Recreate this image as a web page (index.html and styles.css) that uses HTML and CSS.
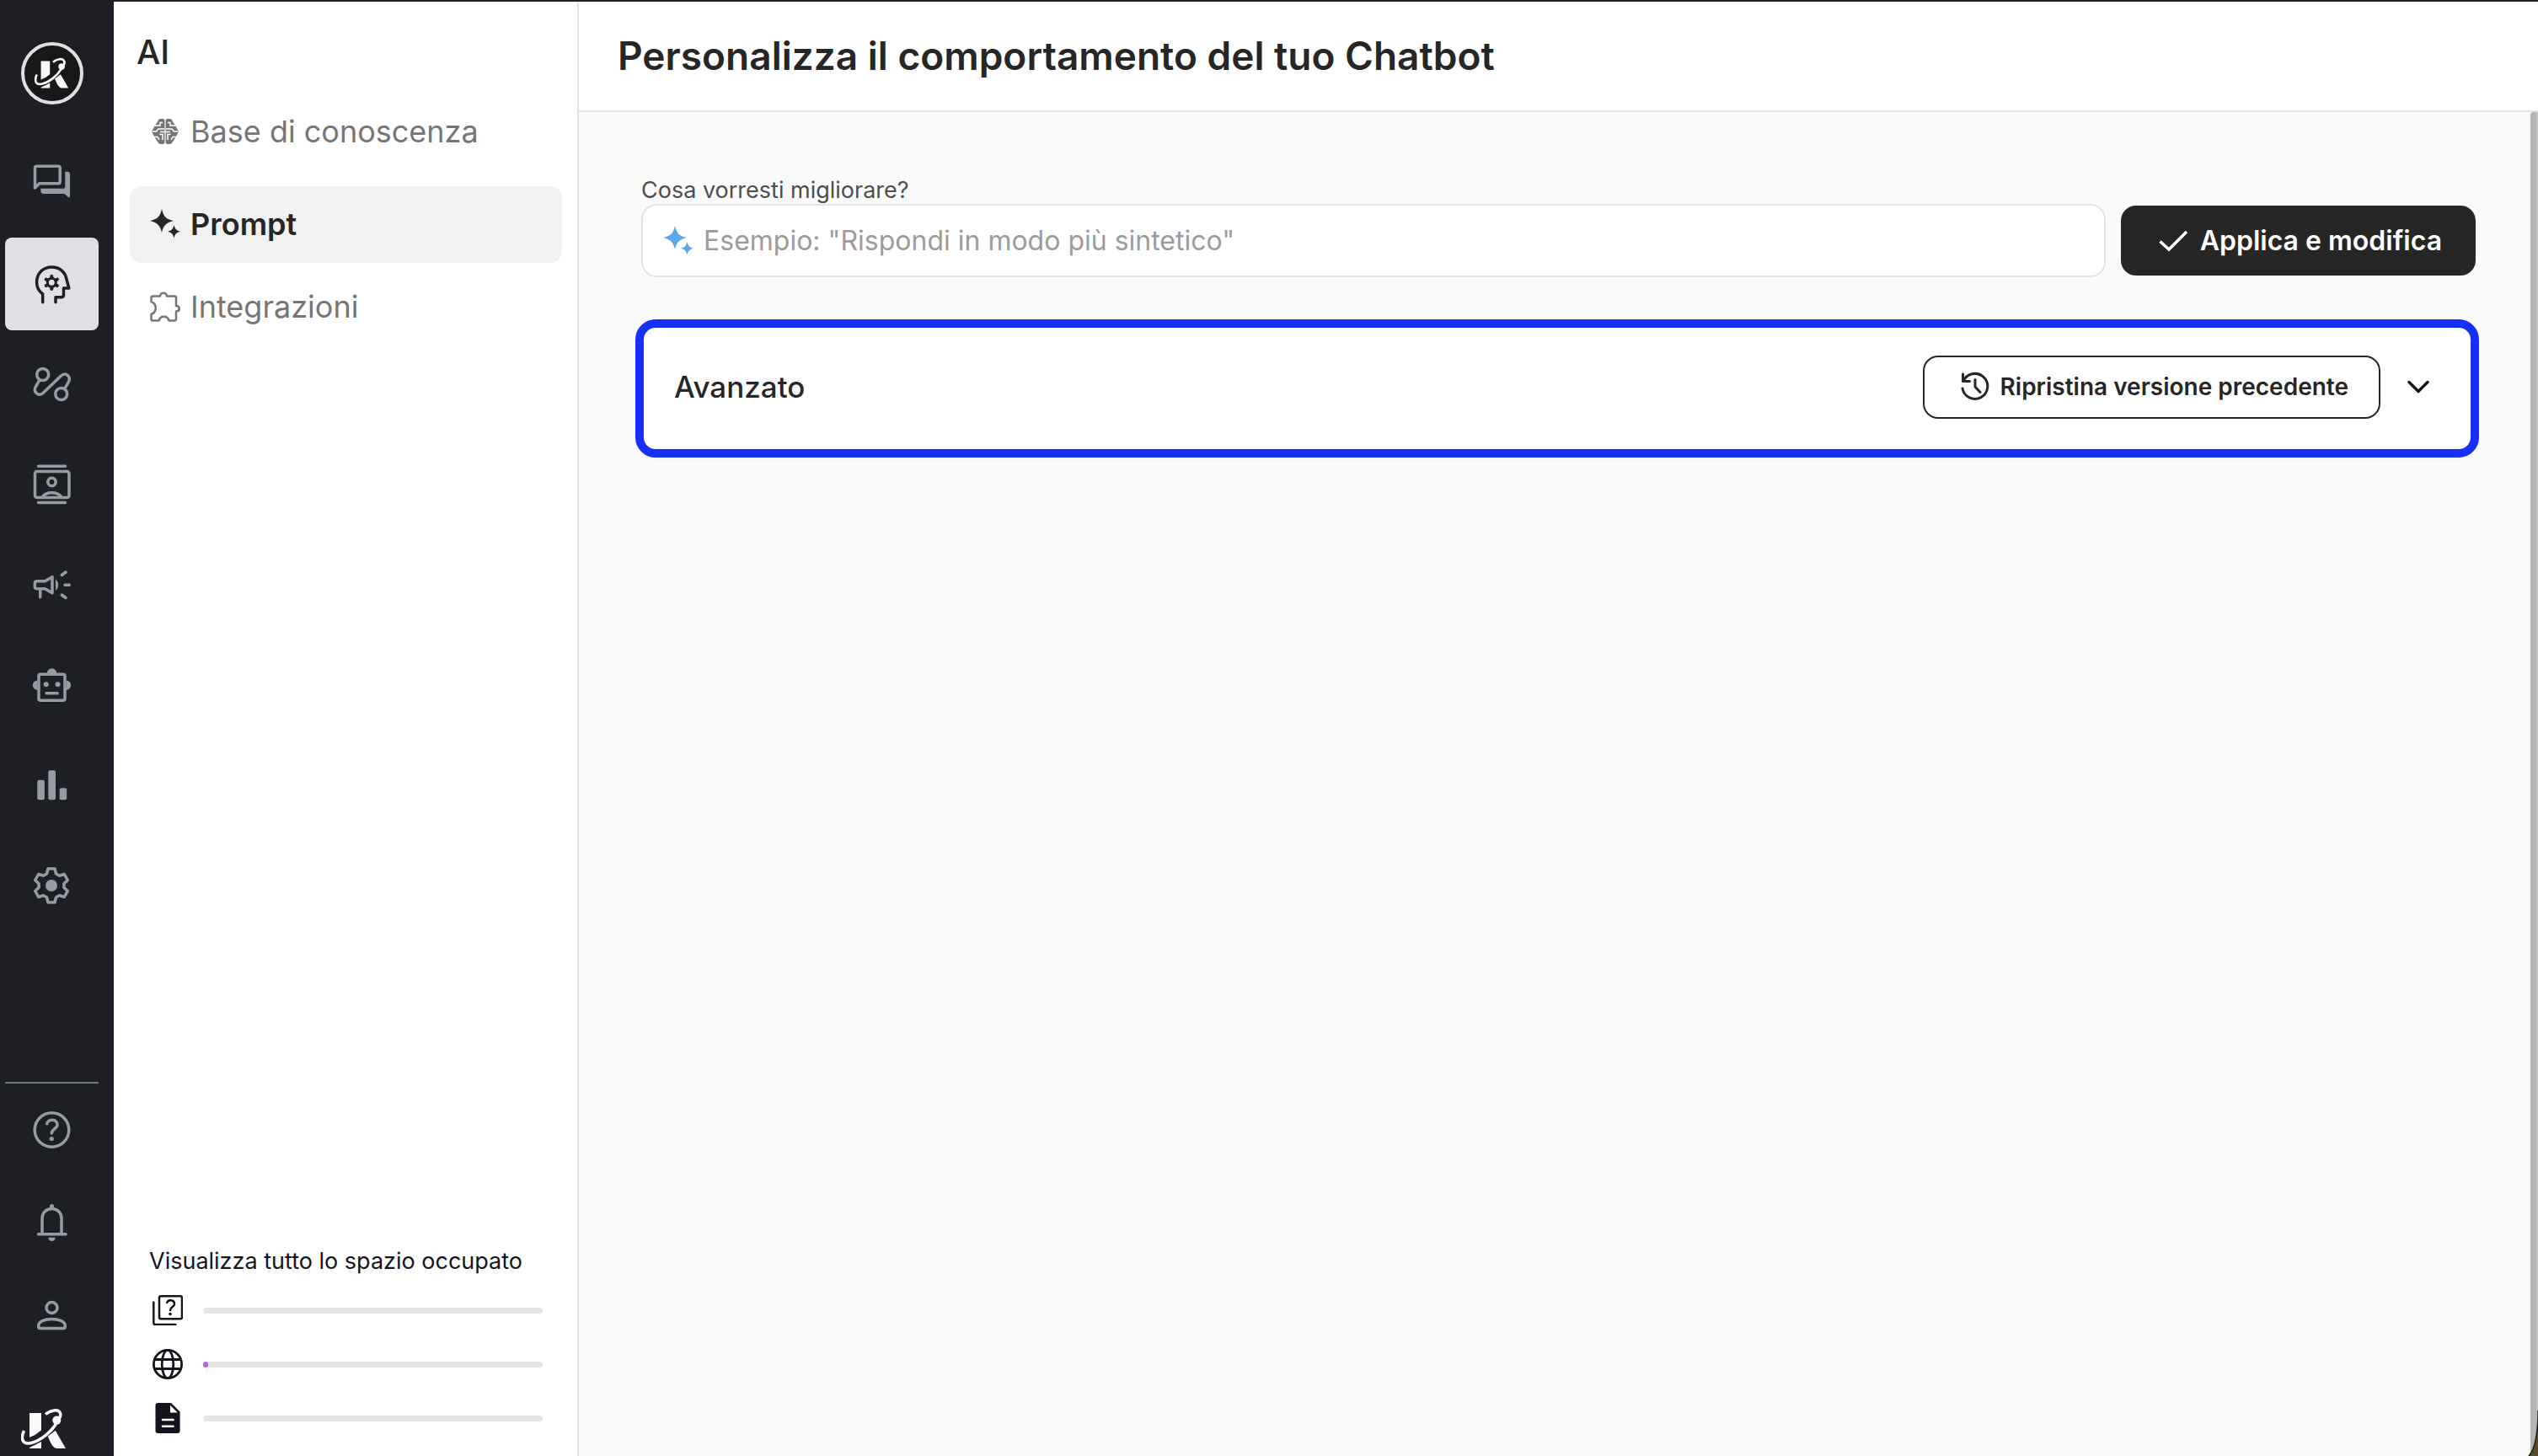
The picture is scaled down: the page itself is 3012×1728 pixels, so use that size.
FILE: index.html
```html
<!DOCTYPE html>
<html lang="it">
<head>
<meta charset="utf-8">
<meta name="viewport" content="width=device-width, initial-scale=1">
<title>Personalizza il comportamento del tuo Chatbot</title>
<link rel="stylesheet" href="styles.css">
</head>
<body>
<svg class="defs" aria-hidden="true">
  <symbol id="logo" viewBox="0 0 54 48">
    <path fill="currentColor" d="M10 5h14v20.500Q17 31.500 10 34zM10 46l14-7v8H10zM31.700 32.700 40.700 25.700 53 47H42Q38 46 35 40z"/>
    <path fill="none" stroke="currentColor" stroke-width="3.500" d="M3.500 26C-1 36 2 43 12 40.500 24 37.500 36 27 42 17"/>
    <circle cx="42.300" cy="13.600" r="5" fill="currentColor"/>
    <path fill="none" stroke="currentColor" stroke-width="3.500" d="M45 12C49 6 46 1 39 2Q33 3 29 6.500"/>
  </symbol>
  <symbol id="sparkle" viewBox="0 0 36 36">
    <path fill="currentColor" d="M14 0C16 9 19 12 28 14 19 16.500 16 19.500 14 28 12 19.500 9 16.500 0 14 9 12 12 9 14 0zM28.500 19C29.700 23.700 31.300 25.500 36 26.700 31.300 28 29.700 29.800 28.500 34.500 27.300 29.800 25.700 28 21 26.700 25.700 25.500 27.300 23.700 28.500 19z"/>
  </symbol>
</svg>

<div class="app">
  <aside class="rail">
    <a class="rail-brand" href="#" aria-label="Home"><svg class="brand-mark"><use href="#logo"/></svg></a>
    <nav class="rail-nav" aria-label="Principale">
      <a class="rail-item" href="#" aria-label="Chat"><svg class="rail-icon" viewBox="0 0 52 52"><path d="M6.500 31V7.200q0-2 2-2h25.700q2 0 2 2v16.600q0 2-2 2H11.700z"/><path class="solid" d="M42.300 11.700H45q3 0 3 3V41q0 1.800-1.700 1.200L41.500 38H17q-3.700 0-3.700-4v-2.300h27q2 0 2-2z"/></svg></a>
      <a class="rail-item is-active" href="#" aria-label="AI" aria-current="page"><svg class="rail-icon" viewBox="0 0 52 52"><path d="M15.700 47.700V38C11 34.500 8.600 30 8.600 24 8.600 13.500 16 6 26.300 6 36 6 42.500 12 44 20.500L46.800 31H40.500v8q0 2.700-2.700 2.700H31v6"/><circle class="thin" cx="26.300" cy="24.300" r="5"/><path class="teeth" d="M26.300 18.500v-1.800M26.300 30.100v1.800M21.300 21.400l-1.600-.9M31.300 27.200l1.600.9M31.300 21.400l1.600-.9M21.300 27.200l-1.600.9"/></svg></a>
      <a class="rail-item" href="#" aria-label="Flussi"><svg class="rail-icon" viewBox="0 0 52 52"><circle cx="15.700" cy="14.500" r="7"/><circle cx="37.700" cy="37.500" r="7"/><path d="M12 21 7.300 29C4 35 10.500 41 16 36.500L37.500 16C43 11 49.500 17 46.500 23L42 31"/></svg></a>
      <a class="rail-item" href="#" aria-label="Contatti"><svg class="rail-icon" viewBox="0 0 52 52"><path d="M10.500 4.300h32M10.500 47.500h32"/><rect x="6.500" y="10.500" width="40.500" height="31" rx="2.500"/><circle cx="26.500" cy="23" r="4.700"/><path d="M15 41c5-7 18-7 23 0"/></svg></a>
      <a class="rail-item" href="#" aria-label="Campagne"><svg class="rail-icon" viewBox="0 0 52 52"><path d="M9 21.700h9.500l8.500-5v19l-8.500-5H9q-2.700 0-2.700-2.700v-3.600q0-2.700 2.700-2.700zM12.700 31.700v9M38.300 14.500l4.700-3.500M42 26.300h5.300M38.300 38l4.700 3.500"/><path class="solid" d="M31 19.300q6.500 7 0 14z"/></svg></a>
      <a class="rail-item" href="#" aria-label="Bot"><svg class="rail-icon" viewBox="0 0 52 52"><rect x="11" y="13.300" width="31" height="31" rx="2"/><path class="solid" d="M20.800 12a5.700 5.700 0 0 1 11.400 0zM9.500 20.600a5.700 5.700 0 0 0 0 11.400zM43.500 20.600a5.700 5.700 0 0 1 0 11.400z"/><circle class="solid" cx="19.700" cy="25.300" r="3"/><circle class="solid" cx="33.500" cy="25.300" r="3"/><path d="M20 35.700h13.200"/></svg></a>
      <a class="rail-item" href="#" aria-label="Statistiche"><svg class="rail-icon" viewBox="0 0 52 52"><rect class="solid" x="9.300" y="19.700" width="8.600" height="23.600" rx="2"/><rect class="solid" x="22.300" y="8.300" width="8.700" height="35" rx="2"/><rect class="solid" x="35.700" y="29.300" width="8.500" height="14" rx="2"/></svg></a>
      <a class="rail-item" href="#" aria-label="Impostazioni"><svg class="rail-icon" viewBox="0 0 52 52"><path d="M20.500 12 22 6h8l1.500 6 3.900 2.200 5.900-1.700 4 7-4.400 4.300v4.400l4.400 4.300-4 7-5.900-1.700-3.900 2.200L30 46h-8l-1.500-6-3.900-2.200-5.900 1.700-4-7 4.400-4.300v-4.400l-4.400-4.300 4-7 5.900 1.700z"/><circle class="solid" cx="26" cy="26" r="7"/></svg></a>
    </nav>
    <nav class="rail-foot" aria-label="Account">
      <a class="rail-item" href="#" aria-label="Aiuto"><svg class="rail-icon" viewBox="0 0 52 52"><circle cx="26.500" cy="26" r="20.300"/><path d="M20.700 18.700C22 12.500 33 12.500 33 20 33 24.500 26.300 25 26.300 30"/><circle class="solid" cx="26.300" cy="36.500" r="2.600"/></svg></a>
      <a class="rail-item" href="#" aria-label="Notifiche"><svg class="rail-icon" viewBox="0 0 52 52"><path d="M15 39V21.500C15 14 20 9.500 26.500 9.500S38 14 38 21.500V39M10.500 39.700H43"/><path class="solid" d="M24 9V6.500a2.500 2.500 0 0 1 5 0V9zM22.300 43.700h8.400a4.200 4.200 0 0 1-8.400 0z"/></svg></a>
      <a class="rail-item" href="#" aria-label="Profilo"><svg class="rail-icon" viewBox="0 0 52 52"><circle cx="26.500" cy="17" r="6.500"/><path d="M10.700 38.500C10.700 33 19 30.500 26.500 30.500S42.300 33 42.300 38.500V39.500q0 2-2 2H12.700q-2 0-2-2z"/></svg></a>
    </nav>
    <svg class="rail-logo"><use href="#logo"/></svg>
  </aside>

  <aside class="panel">
    <h2 class="panel-title">AI</h2>
    <nav class="menu" aria-label="AI">
      <a class="menu-item" href="#"><svg class="menu-icon" viewBox="0 0 36 36"><path fill="currentColor" d="M11 3h5l1.400 1.500v27L16 33h-5l-5.500-8L2 18 6 11zM20 3h5l5 8 4 7-3.500 7L25 33h-5l-1.400-1.500v-27z"/><path fill="none" stroke="#fff" stroke-width="1.500" d="M6 11h6V7.500h3M2.500 18h5l2.500-3h7M5 24.500h4l2 3.500M11.500 21.500h3.500V28M30 11h-6V7.500h-3M33.500 18h-5L26 15h-7M31 24.500h-4L25 28M24.500 21.500H21V28M12 18.500h12"/></svg><span>Base di conoscenza</span></a>
      <a class="menu-item is-active" href="#" aria-current="page"><svg class="menu-icon"><use href="#sparkle"/></svg><span>Prompt</span></a>
      <a class="menu-item" href="#"><svg class="menu-icon" viewBox="0 0 36 36"><path fill="none" stroke="currentColor" stroke-width="2.500" stroke-linejoin="round" d="M3.500 5.500H12C12 .5 20 .5 20 5.500h9q2 0 2 2V17c5 0 5 6.500 0 6.500v9q0 2-2 2h-6.500C21 28 12 28 10.500 34.500h-7q-2 0-2-2V27c7-3 7-12 0-15V7.500q0-2 2-2z"/></svg><span>Integrazioni</span></a>
    </nav>
    <section class="storage">
      <h3 class="storage-title">Visualizza tutto lo spazio occupato</h3>
      <div class="storage-row">
        <svg class="storage-icon" viewBox="0 0 36 36"><g fill="none" stroke="currentColor" stroke-width="2.500" stroke-linecap="round"><rect x="8" y="1.300" width="27" height="27" rx="2"/><path d="M1.300 8.500V33q0 2 2 2h24M17.300 9C18 5 26 5 26 10.500 26 14 21 14 21 18"/></g><circle cx="21" cy="22.500" r="1.800" fill="currentColor"/></svg>
        <div class="meter"></div>
      </div>
      <div class="storage-row">
        <svg class="storage-icon" viewBox="0 0 36 36"><g fill="none" stroke="currentColor" stroke-width="2.800"><circle cx="18" cy="18" r="16.600"/><ellipse cx="18" cy="18" rx="6.800" ry="16.600"/><path d="M2 12.500h32M2 23.500h32"/></g></svg>
        <div class="meter"><div class="meter-fill" style="width: 1.500%"></div></div>
      </div>
      <div class="storage-row">
        <svg class="storage-icon" viewBox="0 0 36 36"><path fill="currentColor" d="M6.500 0H22L32.600 10.500V33q0 3-3 3H6.500q-3 0-3-3V3q0-3 3-3z"/><path fill="#fff" d="M21 2.800V11.500h8.800z"/><path stroke="#fff" stroke-width="2.600" stroke-linecap="round" d="M12 20h12.500M12 27.800h12.500"/></svg>
        <div class="meter"></div>
      </div>
    </section>
  </aside>

  <main class="main">
    <header class="main-head"><h1 class="main-title">Personalizza il comportamento del tuo Chatbot</h1></header>
    <div class="content">
      <div class="card">
        <label class="field-label" for="improve">Cosa vorresti migliorare?</label>
        <form class="prompt-form">
          <div class="field"><svg class="field-icon"><use href="#sparkle"/></svg><input class="field-input" id="improve" type="text" placeholder="Esempio: &quot;Rispondi in modo più sintetico&quot;"></div>
          <button class="btn btn-primary" type="button"><svg class="btn-icon" viewBox="0 0 36 36"><path d="M2.500 18.500 13 28 34 7" fill="none" stroke="currentColor" stroke-width="3.500"/></svg>Applica e modifica</button>
        </form>
        <section class="advanced">
          <h2 class="advanced-title">Avanzato</h2>
          <button class="btn btn-outline" type="button"><svg class="btn-icon" viewBox="0 0 36 36"><g fill="none" stroke="currentColor" stroke-width="3" stroke-linecap="round" stroke-linejoin="round"><path d="M3.500 3v8.500h8M4 11.500A15 15 0 1 1 3 20M18 9.500V18l6 6.500"/></g></svg>Ripristina versione precedente</button>
          <button class="toggle" type="button" aria-label="Espandi"><svg class="toggle-icon" viewBox="0 0 28 28"><path d="M3 8.500 14 19.500 25 8.500" fill="none" stroke="currentColor" stroke-width="3.500" stroke-linecap="round" stroke-linejoin="round"/></svg></button>
        </section>
      </div>
      <div class="scrollbar"></div>
    </div>
  </main>
</div>
<svg class="corner" viewBox="0 0 12 54" aria-hidden="true"><path fill="#5a4c28" d="M12 0V54H1Q12 42 12 0z"/><path fill="none" stroke="#222" stroke-width="1.500" d="M12 0Q12 42 1 54"/></svg>
</body>
</html>
```
FILE: styles.css
```css
* { box-sizing: border-box; }

body {
  margin: 0;
  font-family: Inter, "Liberation Sans", sans-serif;
  color: #262626;
  background: #f9f9f9;
}

h1, h2, h3 { margin: 0; }
a { color: inherit; text-decoration: none; }
button, input { font: inherit; color: inherit; }
svg { display: block; flex: none; }

.defs { position: absolute; width: 0; height: 0; }

.app {
  display: flex;
  min-height: 100vh;
  border-top: 2px solid #221f20;
}

/* Icon rail */
.rail {
  display: flex;
  flex-direction: column;
  flex: none;
  width: 135px;
  padding: 48px 18px 8px 6px;
  background: #1e1f24;
  color: #969ca5;
}

.rail-brand {
  display: grid;
  place-items: center;
  align-self: center;
  width: 74px;
  height: 74px;
  margin-bottom: 39px;
  border: 4px solid #dfe0e4;
  border-radius: 50%;
  background: #181818;
  color: #fafafa;
}

.brand-mark { width: 41px; height: 38px; }

.rail-nav {
  display: flex;
  flex-direction: column;
  gap: 9px;
}

.rail-item {
  display: grid;
  place-items: center;
  height: 110px;
  padding-right: 2px;
  border-radius: 8px;
}

.rail-item.is-active { background: #dfe0e4; color: #1e1f24; }

.rail-icon {
  width: 52px;
  height: 52px;
  fill: none;
  stroke: currentColor;
  stroke-width: 3.5;
  stroke-linecap: round;
  stroke-linejoin: round;
}

.rail-icon .solid { fill: currentColor; stroke: none; }
.rail-icon .thin { stroke-width: 3; }
.rail-icon .teeth { stroke-width: 4; }

.rail-foot {
  margin-top: auto;
  border-top: 2px solid #6f7780;
}

.rail-logo {
  width: 54px;
  height: 48px;
  margin: 56px 0 0 19px;
  color: #fafafa;
}

/* Section panel */
.panel {
  display: flex;
  flex-direction: column;
  flex: none;
  width: 552px;
  padding: 36px 18px 13px 19px;
  border-right: 2px solid #e4e4e4;
  background: #fff;
}

.panel-title {
  padding-left: 8px;
  font-size: 40px;
  line-height: 48px;
  font-weight: 500;
}

.menu {
  display: flex;
  flex-direction: column;
  gap: 7px;
  margin-top: 25px;
}

.menu-item {
  display: flex;
  align-items: center;
  gap: 12px;
  height: 91px;
  padding: 0 0 2px 24px;
  border-radius: 14px;
  color: #757575;
  font-size: 36px;
  font-weight: 400;
}

.menu-item:first-child { margin-bottom: 12px; }

.menu-item.is-active {
  background: #f1f1f1;
  color: #262626;
  font-weight: 600;
}

.menu-icon { width: 36px; height: 36px; }

.storage {
  margin-top: auto;
  padding: 0 23px;
  color: #14141c;
}

.storage-title {
  margin-bottom: 8px;
  font-size: 27px;
  line-height: 36px;
  font-weight: 400;
  white-space: nowrap;
}

.storage-row {
  display: flex;
  align-items: center;
  gap: 24px;
  height: 64px;
  padding-left: 4px;
}

.storage-icon { width: 36px; height: 36px; }

.meter {
  flex: 1;
  height: 7px;
  border-radius: 4px;
  background: #e4e4e4;
}

.meter-fill {
  height: 7px;
  border-radius: 4px;
  background: #b565d8;
}

/* Main area */
.main {
  display: flex;
  flex-direction: column;
  flex: 1;
  min-width: 0;
}

.main-head {
  padding: 36px 46px 37px;
  border-bottom: 2px solid #e4e4e4;
  background: #fff;
}

.main-title {
  font-size: 46px;
  line-height: 56px;
  font-weight: 600;
}

.content {
  display: flex;
  align-items: stretch;
  flex: 1;
  padding-left: 37px;
}

.card {
  flex: 1;
  align-self: flex-start;
  margin: 37px 28px 0 0;
  padding: 40px 37px 22px;
  border-radius: 36px;
  background: #fafafa;
}

.field-label {
  display: block;
  font-size: 27px;
  line-height: 32px;
  color: #4d4d4d;
}

.prompt-form {
  display: flex;
  align-items: center;
  gap: 18px;
}

.field {
  display: flex;
  align-items: center;
  flex: 1;
  gap: 12px;
  height: 87px;
  padding: 0 24px;
  border: 2px solid #e4e4e4;
  border-radius: 18px;
  background: #fff;
}

.field-icon {
  width: 36px;
  height: 36px;
  color: #5ba8e8;
}

.field-input {
  flex: 1;
  min-width: 0;
  padding: 0;
  border: 0;
  outline: 0;
  background: none;
  font-size: 32px;
  line-height: 40px;
}

.field-input::placeholder { color: #9b9b9b; opacity: 1; }

.btn {
  display: flex;
  align-items: center;
  border-radius: 18px;
  font-weight: 600;
  white-space: nowrap;
}

.btn-icon { width: 36px; height: 36px; }

.btn-primary {
  gap: 14px;
  height: 83px;
  padding: 0 40px 0 44px;
  border: 0;
  background: #262626;
  color: #fff;
  font-size: 32px;
}

.advanced {
  display: flex;
  align-items: center;
  height: 164px;
  margin: 50px -4px 0 -7px;
  padding: 0 48px 4px 36px;
  border: 10px solid #1430fa;
  border-radius: 24px;
  background: #fff;
}

.advanced-title {
  flex: 1;
  font-size: 35px;
  line-height: 42px;
  font-weight: 500;
}

.btn-outline {
  gap: 12px;
  height: 75px;
  padding: 0 36px 0 42px;
  border: 2px solid #262626;
  background: #fff;
  font-size: 28px;
}

.toggle {
  margin-left: 31px;
  padding: 0;
  border: 0;
  background: none;
  color: #14141c;
}

.toggle-icon { width: 28px; height: 28px; }

.scrollbar {
  width: 9px;
  border-right: 2px solid #c4c4c6;
  border-top-left-radius: 4px;
  background: #b3b3b5;
}

/* Rounded window corner */
.corner {
  position: fixed;
  right: 0;
  bottom: 0;
  width: 12px;
  height: 54px;
}
```
